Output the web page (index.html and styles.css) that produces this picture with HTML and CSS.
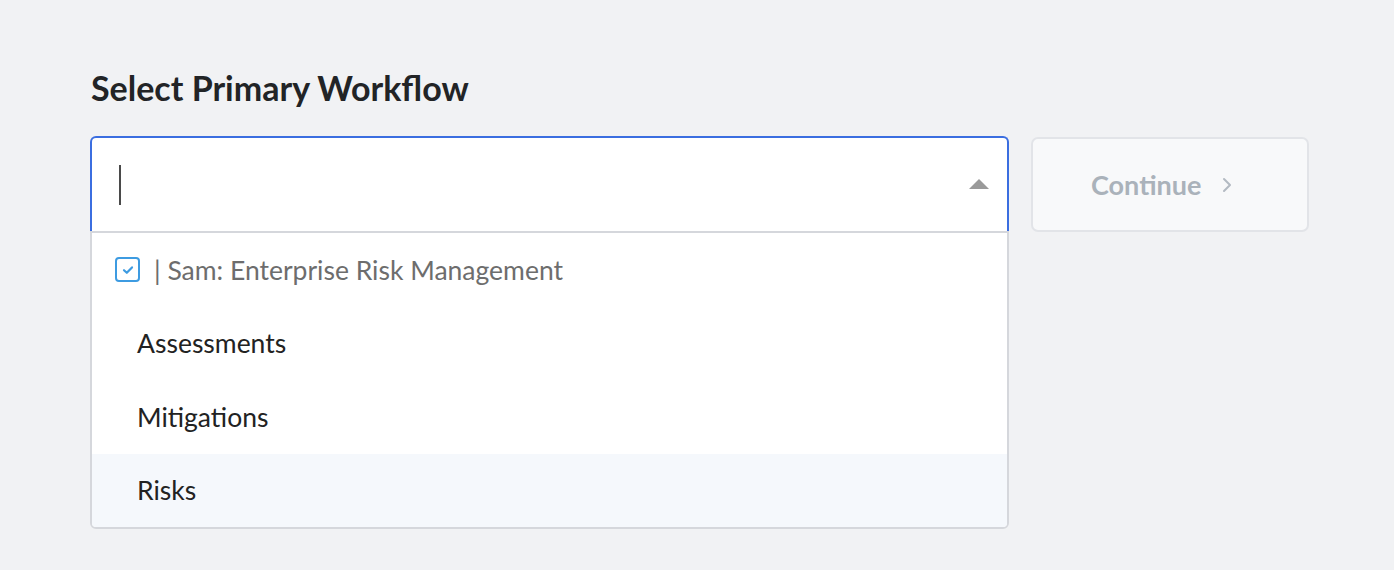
FILE: index.html
```html
<!DOCTYPE html>
<html lang="en">
<head>
    <meta charset="UTF-8">
    <title>Select Primary Workflow</title>
    <link rel="stylesheet" href="styles.css">
</head>
<body>
    <div class="page">
        <h1>Select Primary Workflow</h1>

        <div class="picker-row">
            <div class="picker">
                <div class="picker-input">
                    <span class="caret"></span>
                    <span class="arrow-up"></span>
                </div>
                <ul class="menu">
                    <li class="menu-group">
                        <span class="check">
                            <svg width="12" height="10" viewBox="0 0 12 10"><path d="M2 5.2 L4.8 7.8 L10 2.4" fill="none" stroke="#3d9be1" stroke-width="2.2" stroke-linecap="round" stroke-linejoin="round"/></svg>
                        </span>
                        <span class="group-label">| Sam: Enterprise Risk Management</span>
                    </li>
                    <li class="menu-item">Assessments</li>
                    <li class="menu-item">Mitigations</li>
                    <li class="menu-item hovered">Risks</li>
                </ul>
            </div>

            <button class="btn-continue" disabled>
                Continue
                <svg width="12" height="18" viewBox="0 0 12 18"><path d="M3 3 L9 9 L3 15" fill="none" stroke="#b3bac2" stroke-width="2" stroke-linecap="round" stroke-linejoin="round"/></svg>
            </button>
        </div>
    </div>
</body>
</html>
```

FILE: styles.css
```css
body {
    margin: 0;
    background: #f1f2f4;
    font-family: 'Lato', 'Open Sans', sans-serif;
    color: #222;
}

.page {
    padding: 64px 0 0 90px;
}

h1 {
    margin: 0 0 24px 1px;
    font-size: 34px;
    font-weight: 700;
    line-height: 48px;
    color: #222426;
}

.picker-row {
    display: flex;
    align-items: flex-start;
    gap: 22px;
}

.picker {
    width: 919px;
    flex-shrink: 0;
}

.picker-input {
    height: 95px;
    box-sizing: border-box;
    border: 2px solid #3b6ee0;
    border-bottom: none;
    border-radius: 6px 6px 0 0;
    background: #fff;
    display: flex;
    align-items: center;
    justify-content: space-between;
    padding: 0 18px 0 27px;
}

.caret {
    width: 2px;
    height: 40px;
    background: #4a4a4a;
}

.arrow-up {
    width: 0;
    height: 0;
    border-left: 10px solid transparent;
    border-right: 10px solid transparent;
    border-bottom: 10px solid #9a9a9a;
    margin-top: -2px;
}

.menu {
    list-style: none;
    margin: 0;
    padding: 0;
    background: #fff;
    border: 2px solid #d5d7dc;
    border-radius: 0 0 6px 6px;
    overflow: hidden;
}

.menu li {
    height: 73.5px;
    display: flex;
    align-items: center;
    font-size: 26.5px;
}

.menu-group {
    padding-left: 23px;
    color: #6f6f6f;
}

.check {
    width: 21px;
    height: 21px;
    border: 2px solid #3d9be1;
    border-radius: 4px;
    display: flex;
    align-items: center;
    justify-content: center;
    margin-right: 14px;
}

.group-label {
    color: #6d6d6d;
}

.menu-item {
    padding-left: 45px;
    color: #222;
}

.menu-item.hovered {
    background: #f5f8fc;
}

.btn-continue {
    flex-shrink: 0;
    width: 278px;
    height: 95px;
    margin-top: 1px;
    padding: 0 0 0 0;
    background: #f8f9fa;
    border: 2px solid #e2e4e8;
    border-radius: 7px;
    font-family: inherit;
    font-size: 27px;
    font-weight: 700;
    color: #aab2ba;
    display: flex;
    align-items: center;
    justify-content: flex-start;
    padding-left: 58px;
    gap: 20px;
}
```
